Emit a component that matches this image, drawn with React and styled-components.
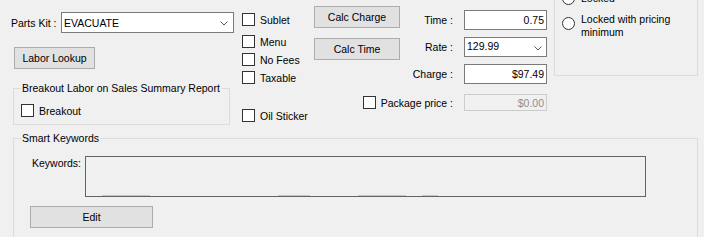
import React from "react";
import styled, { createGlobalStyle } from "styled-components";

const Global = createGlobalStyle`
  html, body {
    margin: 0;
    padding: 0;
    background: #f0f0f0;
  }
  body {
    font-family: "Liberation Sans", Arial, sans-serif;
    font-size: 10.5px;
    color: #000;
  }
`;

const Page = styled.div`
  width: 704px;
  height: 237px;
  overflow: hidden;
  background: #f0f0f0;
  position: relative;
`;

const TopArea = styled.div`
  display: flex;
  align-items: flex-start;
  height: 138px;
`;

const LeftCol = styled.div`
  display: flex;
  flex-direction: column;
  align-items: flex-start;
  width: 223px;
  margin-left: 11px;
  padding-top: 12px;
`;

const PartsRow = styled.div`
  display: flex;
  align-items: center;
  width: 100%;
  justify-content: space-between;
`;

const Combo = styled.div`
  box-sizing: border-box;
  width: ${(p) => p.$width}px;
  height: ${(p) => p.$height}px;
  border: 1px solid #7a7a7a;
  background: #fff;
  display: flex;
  align-items: ${(p) => (p.$top ? "flex-start" : "center")};
  justify-content: space-between;
  padding: ${(p) => (p.$top ? "1px 4px 0 2px" : "0 5px 0 2px")};
  line-height: 14px;
  svg {
    flex: none;
    align-self: center;
    margin-top: 1px;
  }
`;

const Button = styled.div`
  box-sizing: border-box;
  width: ${(p) => p.$width}px;
  height: 22px;
  margin-top: ${(p) => p.$mt || 0}px;
  margin-left: ${(p) => p.$ml || 0}px;
  border: 1px solid #adadad;
  background: #e1e1e1;
  display: flex;
  align-items: center;
  justify-content: center;
`;

const GroupBox = styled.div`
  position: relative;
  box-sizing: border-box;
  border: 1px solid #dcdcdc;
  width: ${(p) => p.$width}px;
  height: ${(p) => p.$height}px;
  margin-top: ${(p) => p.$mt || 0}px;
  margin-left: ${(p) => p.$ml || 0}px;
  padding: ${(p) => p.$pad || "0"};
`;

const Legend = styled.span`
  position: absolute;
  top: -7px;
  left: 7px;
  padding: 0 1px;
  background: #f0f0f0;
  line-height: 13px;
  white-space: nowrap;
`;

const Check = styled.label`
  display: flex;
  align-items: center;
  height: 13px;
  margin-top: ${(p) => p.$mt || 0}px;
  white-space: nowrap;
`;

const Box = styled.span`
  box-sizing: border-box;
  width: 13px;
  height: 13px;
  flex: none;
  border: 1px solid #333;
  background: #fff;
  margin-right: 5px;
`;

const CheckCol = styled.div`
  display: flex;
  flex-direction: column;
  width: 72px;
  margin-left: 8px;
  padding-top: 13px;
`;

const CalcArea = styled.div`
  display: flex;
  flex-direction: column;
  width: 233px;
`;

const CalcTop = styled.div`
  display: flex;
`;

const ButtonCol = styled.div`
  display: flex;
  flex-direction: column;
  width: 86px;
  padding-top: 6px;
`;

const FieldGrid = styled.div`
  flex: 1;
  display: grid;
  grid-template-columns: 1fr 83px;
  grid-auto-rows: 20px;
  row-gap: 7px;
  column-gap: 11px;
  padding-top: 10px;
`;

const FieldLabel = styled.span`
  justify-self: end;
  align-self: center;
  white-space: nowrap;
`;

const Input = styled.div`
  box-sizing: border-box;
  width: 83px;
  height: ${(p) => p.$height || 20}px;
  border: 1px solid ${(p) => (p.$disabled ? "#cccccc" : "#7a7a7a")};
  background: ${(p) => (p.$disabled ? "#f0f0f0" : "#fff")};
  color: ${(p) => (p.$disabled ? "#8d8d8d" : "#000")};
  display: flex;
  align-items: center;
  justify-content: flex-end;
  padding-right: 2px;
`;

const PackageRow = styled.div`
  display: flex;
  align-items: center;
  justify-content: flex-end;
  margin-top: 10px;
  height: 17px;
`;

const PackageLabel = styled.label`
  display: flex;
  align-items: center;
  margin-right: 11px;
  white-space: nowrap;
`;

const RadioGroup = styled(GroupBox)`
  margin-top: -20px;
  display: flex;
  flex-direction: column;
  padding: 0 0 0 7px;
`;

const Radio = styled.div`
  display: flex;
  align-items: ${(p) => (p.$multi ? "flex-start" : "center")};
  margin-top: ${(p) => p.$mt || 0}px;
  line-height: 13px;
`;

const Circle = styled.span`
  box-sizing: border-box;
  width: 13px;
  height: 13px;
  flex: none;
  border: 1px solid #333;
  border-radius: 50%;
  background: #fff;
  margin-right: 6px;
  margin-top: ${(p) => p.$mt || 0}px;
`;

const KeywordsRow = styled.div`
  display: flex;
  align-items: flex-start;
  margin-left: 18px;
  margin-top: 17px;
`;

const KeywordsLabel = styled.span`
  width: 53px;
  padding-top: 1px;
  line-height: 13px;
`;

const KeywordsBox = styled.div`
  position: relative;
  box-sizing: border-box;
  width: 561px;
  height: 41px;
  border: 1px solid #646464;
  background: #f0f0f0;
`;

const Ghost = styled.span`
  position: absolute;
  bottom: 0;
  height: 1px;
  background: #c4c4c4;
`;

const Chevron = () => (
  <svg width="8" height="5" viewBox="0 0 8 5">
    <path d="M0.5 0.5 L4 4 L7.5 0.5" fill="none" stroke="#555" strokeWidth="1" />
  </svg>
);

function CheckItem({ label, mt }) {
  return (
    <Check $mt={mt}>
      <Box />
      {label}
    </Check>
  );
}

export default function App() {
  const ghosts = [
    [16, 48],
    [192, 32],
    [272, 48],
    [336, 16],
  ];
  return (
    <Page>
      <Global />
      <TopArea>
        <LeftCol>
          <PartsRow>
            <span>Parts Kit :</span>
            <Combo $width={173} $height={21}>
              <span>EVACUATE</span>
              <Chevron />
            </Combo>
          </PartsRow>
          <Button $width={81} $mt={14} $ml={3}>
            Labor Lookup
          </Button>
          <GroupBox $width={217} $height={37} $mt={19} $ml={2} $pad="15px 0 0 7px">
            <Legend>Breakout Labor on Sales Summary Report</Legend>
            <CheckItem label="Breakout" />
          </GroupBox>
        </LeftCol>

        <CheckCol>
          <CheckItem label="Sublet" />
          <CheckItem label="Menu" mt={9} />
          <CheckItem label="No Fees" mt={5} />
          <CheckItem label="Taxable" mt={5} />
          <CheckItem label="Oil Sticker" mt={25} />
        </CheckCol>

        <CalcArea>
          <CalcTop>
            <ButtonCol>
              <Button $width={86}>Calc Charge</Button>
              <Button $width={86} $mt={10}>
                Calc Time
              </Button>
            </ButtonCol>
            <FieldGrid>
              <FieldLabel>Time :</FieldLabel>
              <Input>0.75</Input>
              <FieldLabel>Rate :</FieldLabel>
              <Combo $width={83} $height={20} $top>
                <span>129.99</span>
                <Chevron />
              </Combo>
              <FieldLabel>Charge :</FieldLabel>
              <Input>$97.49</Input>
            </FieldGrid>
          </CalcTop>
          <PackageRow>
            <PackageLabel>
              <Box />
              <span>Package price :</span>
            </PackageLabel>
            <Input $disabled $height={17}>
              $0.00
            </Input>
          </PackageRow>
        </CalcArea>

        <RadioGroup $width={144} $height={96} $ml={7}>
          <Radio $mt={11}>
            <Circle />
            Locked
          </Radio>
          <Radio $mt={8} $multi>
            <Circle $mt={4} />
            <span>
              Locked with pricing
              <br />
              minimum
            </span>
          </Radio>
        </RadioGroup>
      </TopArea>

      <GroupBox $width={685} $height={120} $ml={13}>
        <Legend>Smart Keywords</Legend>
        <KeywordsRow>
          <KeywordsLabel>Keywords:</KeywordsLabel>
          <KeywordsBox>
            {ghosts.map(([left, width]) => (
              <Ghost key={left} style={{ left, width }} />
            ))}
          </KeywordsBox>
        </KeywordsRow>
        <Button $width={123} $mt={9} $ml={16}>
          Edit
        </Button>
      </GroupBox>
    </Page>
  );
}
